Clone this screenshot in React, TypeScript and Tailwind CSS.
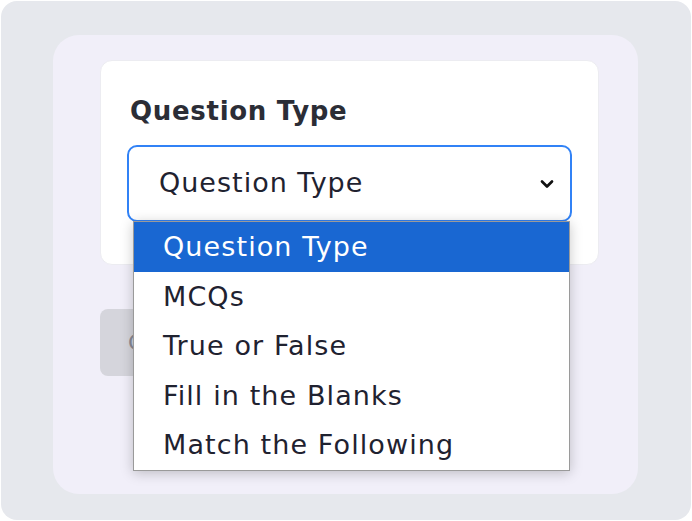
import React from 'react';
import { ChevronDown } from 'lucide-react';

const options = ['Question Type', 'MCQs', 'True or False', 'Fill in the Blanks', 'Match the Following'];

export default function App() {
  return (
    <div
      className="min-h-[521px] w-[692px] bg-white p-px"
      style={{ fontFamily: '"DejaVu Sans", "Open Sans", sans-serif' }}
    >
      <div className="h-[519px] rounded-2xl bg-[#e6e8ed] pt-[34px] pl-[52px] pr-[53px]">
        <div className="h-[459px] rounded-[26px] bg-[#f1eff9] pt-[25px] pl-[47px] pr-[39px]">
          {/* Card with the select */}
          <div className="relative rounded-xl border border-[#ececf1] bg-white px-[26px] pt-[32px] pb-[42px]">
            <label className="mb-[16px] block pl-[3px] text-[26px] leading-[36px] font-bold tracking-[0.7px] text-[#2b2d36]">
              Question Type
            </label>
            <div className="flex h-[77px] items-center justify-between rounded-[10px] border-[2.5px] border-[#3182f6] pl-[30px] pr-[13px]">
              <span className="text-[27px] tracking-[1px] text-[#1f2230]">Question Type</span>
              <ChevronDown className="h-5 w-5 text-[#111]" strokeWidth={3.2} />
            </div>

            {/* Open dropdown list */}
            <ul className="absolute top-[160px] left-[32px] z-10 w-[437px] border border-[#9a9a9a] bg-white shadow-[0_2px_12px_rgba(0,0,0,0.22)]">
              {options.map((opt, i) => (
                <li
                  key={opt}
                  className={
                    i === 0
                      ? 'flex h-[50px] items-center bg-[#1967d2] pl-[29px] text-[27px] tracking-[1.1px] text-white'
                      : 'flex h-[49.5px] items-center pl-[29px] text-[27px] tracking-[1.1px] text-[#1f2230]'
                  }
                >
                  {opt}
                </li>
              ))}
            </ul>
          </div>

          {/* Button partly hidden under the list */}
          <button className="mt-[44px] flex h-[67px] w-[180px] items-center rounded-lg bg-[#d5d5dc] pl-[28px] text-[22px] text-[#8a8a94]">
            Cancel
          </button>
        </div>
      </div>
    </div>
  );
}
